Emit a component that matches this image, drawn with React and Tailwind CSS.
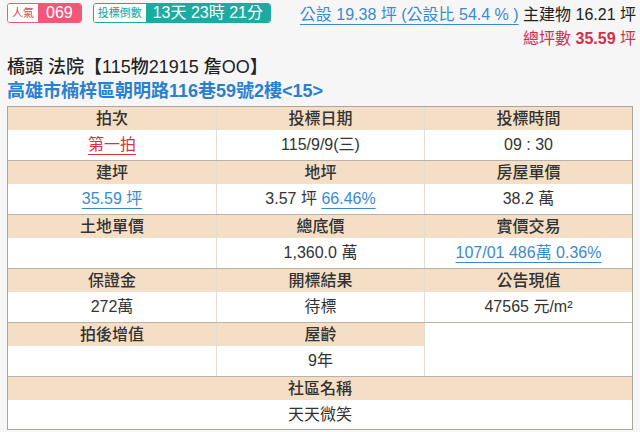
import React from 'react';

const font = { fontFamily: '"Liberation Sans", "Noto Sans CJK TC", sans-serif' };

const link = 'text-[#3a8ad0] underline underline-offset-4 decoration-1';

const rows = [
  [
    { label: '拍次', value: <span className="text-[#d8333f] underline underline-offset-4 decoration-1">第一拍</span> },
    { label: '投標日期', value: '115/9/9(三)' },
    { label: '投標時間', value: '09 : 30' },
  ],
  [
    { label: '建坪', value: <span className={link}>35.59 坪</span> },
    { label: '地坪', value: <span>3.57 坪 <span className={link}>66.46%</span></span> },
    { label: '房屋單價', value: '38.2 萬' },
  ],
  [
    { label: '土地單價', value: '' },
    { label: '總底價', value: '1,360.0 萬' },
    { label: '實價交易', value: <span className={link}>107/01 486萬 0.36%</span> },
  ],
  [
    { label: '保證金', value: '272萬' },
    { label: '開標結果', value: '待標' },
    { label: '公告現值', value: <span>47565 元/m²</span> },
  ],
];

const Pair = ({ cells, first }) => (
  <div className={`grid grid-cols-3 ${first ? '' : 'border-t border-[#b9b2a9]'}`}>
    {cells.map((c, i) => (
      <div key={i} className={`flex flex-col ${i > 0 ? 'border-l border-[#e6ddd2]' : ''}`}>
        <div className="h-[23px] bg-[#f4dfc6] flex items-center justify-center font-medium text-[#333]">{c.label}</div>
        <div className="h-[30px] bg-white flex items-center justify-center text-[#333]">{c.value}</div>
      </div>
    ))}
  </div>
);

export default function App() {
  return (
    <div className="w-[640px] h-[432px] bg-[#f6f6f6] overflow-hidden" style={font}>
      <div className="flex items-start pl-[7px] pr-[4px] pt-[3px]">
        <div className="flex items-center gap-[11px]">
          <div className="flex h-[20px] border border-[#ef5b78] rounded-[3px] overflow-hidden">
            <span className="bg-white text-[#e5405f] text-[11px] px-[4px] flex items-center">人氣</span>
            <span className="bg-[#f0587a] text-white text-[16px] px-[8px] flex items-center">069</span>
          </div>
          <div className="flex h-[20px] border border-[#1eaaa0] rounded-[3px] overflow-hidden">
            <span className="bg-white text-[#1a9c93] text-[11px] px-[4px] flex items-center">投標倒數</span>
            <span className="bg-[#1eaaa0] text-white text-[16px] px-[7px] flex items-center">13天 23時 21分</span>
          </div>
        </div>
        <div className="ml-auto flex flex-col items-end text-[16px] leading-[24px]">
          <div>
            <span className={link}>公設 19.38 坪 (公設比 54.4 % )</span>
            <span className="text-[#222]"> 主建物 16.21 坪</span>
          </div>
          <div className="text-[#d22f4f]">
            總坪數 <span className="font-bold">35.59</span> 坪
          </div>
        </div>
      </div>
      <div className="pl-[7px] mt-[4px] text-[18px] leading-[24px] text-[#222] font-medium">橋頭 法院【115物21915 詹OO】</div>
      <div className="pl-[7px] text-[18px] leading-[24px] text-[#2b7fd0] font-bold">高雄市楠梓區朝明路116巷59號2樓&lt;15&gt;</div>
      <div className="mx-[7px] mt-[3px] border border-[#aaa49c] text-[16px]">
        {rows.map((r, i) => (
          <Pair key={i} cells={r} first={i === 0} />
        ))}
        <div className="grid grid-cols-3 border-t border-[#b9b2a9]">
          <div className="flex flex-col">
            <div className="h-[23px] bg-[#f4dfc6] flex items-center justify-center font-medium text-[#333]">拍後增值</div>
            <div className="h-[30px] bg-white"></div>
          </div>
          <div className="flex flex-col border-l border-[#e6ddd2]">
            <div className="h-[23px] bg-[#f4dfc6] flex items-center justify-center font-medium text-[#333]">屋齡</div>
            <div className="h-[30px] bg-white flex items-center justify-center text-[#333]">9年</div>
          </div>
          <div className="bg-white border-l border-[#e6ddd2]"></div>
        </div>
        <div className="border-t border-[#b9b2a9]">
          <div className="h-[23px] bg-[#f4dfc6] flex items-center justify-center font-medium text-[#333]">社區名稱</div>
          <div className="h-[29px] bg-white flex items-center justify-center text-[#333]">天天微笑</div>
        </div>
      </div>
    </div>
  );
}
